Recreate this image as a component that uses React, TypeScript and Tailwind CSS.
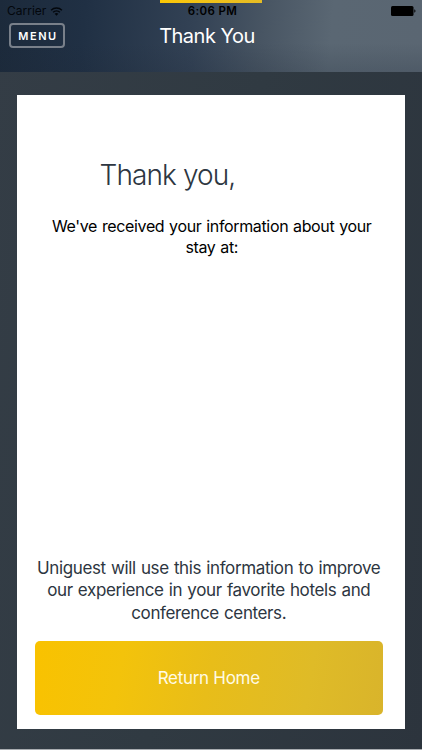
function WifiIcon() {
  return (
    <svg viewBox="0 0 14 10" className="ml-[4px] h-[9px] w-[13px]" fill="none" stroke="#03070c">
      <path d="M1 3.6a8.6 8.6 0 0 1 12 0" strokeWidth="1.6" />
      <path d="M3.2 5.9a5.5 5.5 0 0 1 7.6 0" strokeWidth="1.5" />
      <path d="M7 9.8 4.9 7.6a3 3 0 0 1 4.2 0Z" fill="#03070c" stroke="none" />
    </svg>
  );
}

function BatteryIcon() {
  return (
    <svg viewBox="0 0 25 10" className="h-[10px] w-[25px]" fill="#000">
      <rect x="0" y="0" width="22.5" height="10" rx="1.5" />
      <path d="M23.3 3.3c1.6.4 1.6 3 0 3.4Z" />
    </svg>
  );
}

function StatusBar() {
  return (
    <div className="grid h-[22px] grid-cols-3 items-center pr-[6px] pl-[7px] text-[12px] leading-[22px]">
      <div className="flex items-center text-[#03070c]">
        Carrier
        <WifiIcon />
      </div>
      <div className="pl-[2px] text-center text-[11.5px] font-semibold tracking-[0.035em] whitespace-nowrap text-black">
        6:06 PM
      </div>
      <div className="flex justify-end">
        <BatteryIcon />
      </div>
    </div>
  );
}

function Header() {
  return (
    <header className="relative h-[72px] shrink-0 bg-[linear-gradient(to_bottom,transparent_60%,#1d283730_100%),linear-gradient(95deg,#1c2a3b_0%,#203044_20%,#334255_46%,#485563_62%,#5a6773_78%,#5a6672_100%)]">
      <div className="absolute top-0 left-[160px] h-[2.5px] w-[102px] bg-linear-to-r from-[#fbc704] to-[#e5bc24]" />
      <StatusBar />
      <div className="grid grid-cols-[1fr_auto_1fr] items-start pr-[17px] pl-[9px]">
        <button className="mt-[1px] h-[25px] w-[56px] rounded-[4px] border-2 border-[#79808a] pl-[2px] text-[11px] leading-[23px] font-semibold tracking-[0.14em] text-white">
          MENU
        </button>
        <h1 className="text-[20px] leading-[29px] tracking-[-0.5px] whitespace-nowrap text-white">Thank You</h1>
      </div>
    </header>
  );
}

export default function App() {
  return (
    <div className="flex h-[750px] w-[422px] flex-col overflow-hidden border-b border-[#a9adb1] bg-[linear-gradient(100deg,#343d46_0%,#303a42_50%,#2c343d_100%)] font-['Inter',sans-serif]">
      <Header />
      <main className="mt-[23px] ml-[16.5px] flex h-[634px] w-[388.5px] flex-col bg-white px-[18px] text-center">
        <h2 className="mt-[62px] ml-[65px] text-left text-[28px] leading-[36px] font-light tracking-[-0.9px] text-[#2d3641]">
          Thank you,
        </h2>
        <p className="mt-[22.5px] ml-[2px] text-[16px] leading-[21.5px] tracking-[-0.35px] [word-spacing:0.65px] whitespace-nowrap text-black">
          We've received your information about your
          <br />
          stay at:
        </p>
        <p className="mt-auto mr-[4px] text-[17px] leading-[22.5px] tracking-[-0.38px] [word-spacing:0.8px] whitespace-nowrap text-[#2d3641]">
          Uniguest will use this information to improve
          <br />
          our experience in your favorite hotels and
          <br />
          conference centers.
        </p>
        <button className="mt-[17px] mb-[14px] h-[74px] w-[348.5px] shrink-0 rounded-[5px] bg-[linear-gradient(100deg,#f9c200_0%,#f3c30b_25%,#e8bd19_50%,#dfbb27_78%,#d9b42b_100%)] pt-[1px] text-[17px] tracking-[-0.3px] text-[#fffbe6]">
          Return Home
        </button>
      </main>
    </div>
  );
}
